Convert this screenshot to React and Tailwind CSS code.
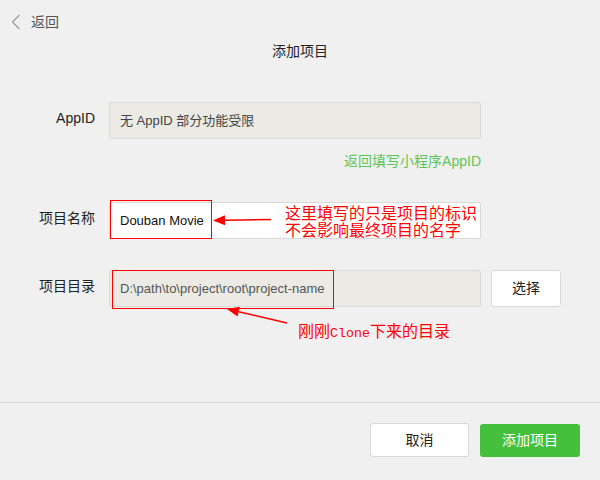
import React from 'react'

const sans = 'font-["Liberation_Sans","Noto_Sans_CJK_SC",sans-serif]'
const note = 'font-["Noto_Sans_CJK_SC",sans-serif] text-[#ff0000]'

function ChevronLeft() {
  return (
    <svg width="10" height="16" viewBox="0 0 10 16" className="block">
      <path d="M8.5 1 L1.5 8 L8.5 15" fill="none" stroke="#9a9a9a" strokeWidth="1.2" />
    </svg>
  )
}

function Arrow({ x1, y1, x2, y2 }) {
  // 红色注释箭头, 箭头尖在 (x2, y2)
  const ang = Math.atan2(y2 - y1, x2 - x1)
  const len = 12
  const w = 5
  const bx = x2 - Math.cos(ang) * len
  const by = y2 - Math.sin(ang) * len
  const px = -Math.sin(ang) * w
  const py = Math.cos(ang) * w
  return (
    <>
      <line x1={x1} y1={y1} x2={bx} y2={by} stroke="#ff0000" strokeWidth="1.6" />
      <polygon points={`${x2},${y2} ${bx + px},${by + py} ${bx - px},${by - py}`} fill="#ff0000" />
    </>
  )
}

export default function App() {
  return (
    <div className={`relative w-[600px] h-[480px] bg-[#f0f0f0] text-[14px] text-[#353535] overflow-hidden ${sans}`}>
      {/* 顶部返回 */}
      <div className="h-[41px] flex items-center pl-[11px] pt-[2px]">
        <ChevronLeft />
        <span className="ml-[10px] text-[#555] leading-[20px]">返回</span>
      </div>
      <div className="h-[20px] leading-[20px] text-center text-[#222]">添加项目</div>

      {/* AppID */}
      <div className="mt-[41px] flex items-start">
        <div className="w-[95px] h-[37px] leading-[33px] text-right text-[#222]">AppID</div>
        <div className="ml-[14px] w-[372px] h-[37px] bg-[#ebeae4] border border-[#d9d9d9] rounded-[2px] flex items-center px-[10px] text-[13px] text-[#444]">
          无 AppID 部分功能受限
        </div>
      </div>
      <div className="mt-[12px] w-[481px] h-[20px] leading-[20px] text-right text-[#5ec45a]">返回填写小程序AppID</div>

      {/* 项目名称 */}
      <div className="mt-[31px] flex items-start">
        <div className="w-[95px] h-[37px] leading-[33px] text-right text-[#222]">项目名称</div>
        <div className="ml-[14px] w-[372px] h-[37px] bg-white border border-[#d9d9d9] rounded-[2px] flex items-center px-[10px] text-[13px] text-[#111]">
          Douban Movie
        </div>
      </div>

      {/* 项目目录 */}
      <div className="mt-[31px] flex items-start">
        <div className="w-[95px] h-[37px] leading-[33px] text-right text-[#222]">项目目录</div>
        <div className="ml-[14px] w-[372px] h-[37px] bg-[#ebeae4] border border-[#d9d9d9] rounded-[2px] flex items-center px-[10px] text-[13px] text-[#555]">
          D:\path\to\project\root\project-name
        </div>
        <button className="ml-[10px] w-[70px] h-[37px] bg-white border border-[#d9d9d9] rounded-[3px] text-[#222]">选择</button>
      </div>

      {/* 底部按钮 */}
      <div className="mt-[95px] border-t border-[#d6d6d6] flex justify-end gap-[11px] pr-[20px] pt-[20px]">
        <button className="w-[99px] h-[34px] bg-white border border-[#d9d9d9] rounded-[3px] text-[#222]">取消</button>
        <button className="w-[100px] h-[33px] mt-[1px] bg-[#44c03c] rounded-[3px] text-white">添加项目</button>
      </div>

      {/* 红色标注 */}
      <div className="absolute left-[110px] top-[200px] w-[102px] h-[39px] border-[1.5px] border-[#ff0000]" />
      <div className="absolute left-[112px] top-[270px] w-[222px] h-[39px] border-[1.5px] border-[#ff0000]" />
      <svg className="absolute left-0 top-0 pointer-events-none" width="600" height="480">
        <Arrow x1={271} y1={219.5} x2={213} y2={220.5} />
        <Arrow x1={287} y1={323} x2={227} y2={309} />
      </svg>
      <div className={`absolute left-[285px] top-[204px] text-[16px] leading-[17px] ${note}`}>
        <div>这里填写的只是项目的标识</div>
        <div>不会影响最终项目的名字</div>
      </div>
      <div className={`absolute left-[298px] top-[321px] text-[16px] leading-[18px] ${note}`}>
        刚刚<span className='font-["Liberation_Mono",monospace] text-[13.3px]'>Clone</span>下来的目录
      </div>
    </div>
  )
}
